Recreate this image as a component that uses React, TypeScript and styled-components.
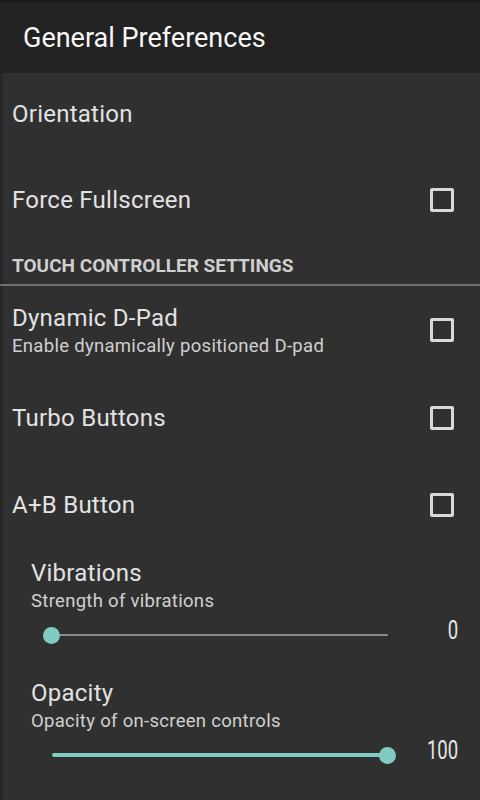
import React from "react";
import styled, { createGlobalStyle } from "styled-components";

const Global = createGlobalStyle`
  html, body { margin: 0; padding: 0; background: #303030; }
  body { font-family: Roboto, "Noto Sans", sans-serif; -webkit-font-smoothing: antialiased; }
  * { box-sizing: border-box; }
`;

const Screen = styled.div`
  width: 480px;
  height: 800px;
  background: #303030;
  display: flex;
  flex-direction: column;
  overflow: hidden;
`;

const Header = styled.header`
  height: 73px;
  flex: none;
  background: #222222;
  border-top: 3px solid #1b1b1b;
  display: flex;
  align-items: center;
  padding: 0 0 0 23px;
  color: #f7f7f7;
  font-size: 27px;
  font-weight: 400;
`;

const Body = styled.main`
  flex: 1;
  display: flex;
  flex-direction: column;
  box-shadow: inset 3px 0 0 #272727;
`;

const Row = styled.div<{ $h: number }>`
  height: ${(p) => p.$h}px;
  flex: none;
  display: flex;
  align-items: center;
  padding: 0 26px 0 12px;
`;

const TextCol = styled.div`
  flex: 1;
  display: flex;
  flex-direction: column;
`;

const Title = styled.div`
  color: #e2e2e2;
  font-size: 24px;
  line-height: 28px;
  letter-spacing: 0.25px;
`;

const Summary = styled.div`
  color: #d0d0d0;
  font-size: 18.5px;
  line-height: 22px;
  letter-spacing: 0.3px;
  margin-top: 3px;
`;

const Checkbox = styled.div`
  width: 24px;
  height: 24px;
  border: 3px solid #d9d9d9;
  border-radius: 2px;
  flex: none;
`;

const SectionHeader = styled.div`
  height: 41px;
  flex: none;
  display: flex;
  align-items: center;
  padding: 0 12px;
  padding-top: 1px;
  color: #cfcfcf;
  font-size: 19px;
  font-weight: 700;
  border-bottom: 2px solid #6e6e6e;
`;

const SliderBlock = styled.div`
  height: 120px;
  flex: none;
  display: flex;
  flex-direction: column;
  padding: 11px 22px 0 31px;
`;

const SliderLine = styled.div`
  display: flex;
  align-items: center;
  height: 34px;
  margin-top: 6px;
`;

const Track = styled.div`
  position: relative;
  margin-left: 21px;
  width: 336px;
  height: 34px;
  flex: none;
`;

const Rail = styled.div<{ $active: boolean }>`
  position: absolute;
  left: 0;
  right: 0;
  top: 50%;
  height: ${(p) => (p.$active ? 4 : 2)}px;
  transform: translateY(-50%);
  background: ${(p) => (p.$active ? "#80cbc2" : "#8c8c8c")};
  border-radius: 2px;
`;

const Thumb = styled.div`
  position: absolute;
  top: 50%;
  width: 17px;
  height: 17px;
  margin: -8.5px 0 0 -9px;
  border-radius: 50%;
  background: #80cbc2;
`;

const Value = styled.div`
  flex: 1;
  text-align: right;
  color: #e6e6e6;
  font-size: 25px;
  line-height: 30px;
  margin-top: -8px;
  span {
    display: inline-block;
    transform: scaleX(0.74);
    transform-origin: right center;
  }
`;

function CheckRow({ title, summary, h }: { title: string; summary?: string; h: number }) {
  return (
    <Row $h={h}>
      <TextCol>
        <Title>{title}</Title>
        {summary && <Summary>{summary}</Summary>}
      </TextCol>
      <Checkbox />
    </Row>
  );
}

function SliderPref({ title, summary, value }: { title: string; summary: string; value: number }) {
  const pct = value / 100;
  return (
    <SliderBlock>
      <Title>{title}</Title>
      <Summary>{summary}</Summary>
      <SliderLine>
        <Track>
          <Rail $active={value > 0} />
          <Thumb style={{ left: `${pct * 100}%` }} />
        </Track>
        <Value>
          <span>{value}</span>
        </Value>
      </SliderLine>
    </SliderBlock>
  );
}

export default function App() {
  return (
    <>
      <Global />
      <Screen>
        <Header>General Preferences</Header>
        <Body>
          <Row $h={82}>
            <TextCol>
              <Title>Orientation</Title>
            </TextCol>
          </Row>
          <CheckRow h={90} title="Force Fullscreen" />
          <SectionHeader>TOUCH CONTROLLER SETTINGS</SectionHeader>
          <CheckRow h={88} title="Dynamic D-Pad" summary="Enable dynamically positioned D-pad" />
          <CheckRow h={87} title="Turbo Buttons" />
          <CheckRow h={87} title="A+B Button" />
          <SliderPref title="Vibrations" summary="Strength of vibrations" value={0} />
          <SliderPref title="Opacity" summary="Opacity of on-screen controls" value={100} />
        </Body>
      </Screen>
    </>
  );
}
